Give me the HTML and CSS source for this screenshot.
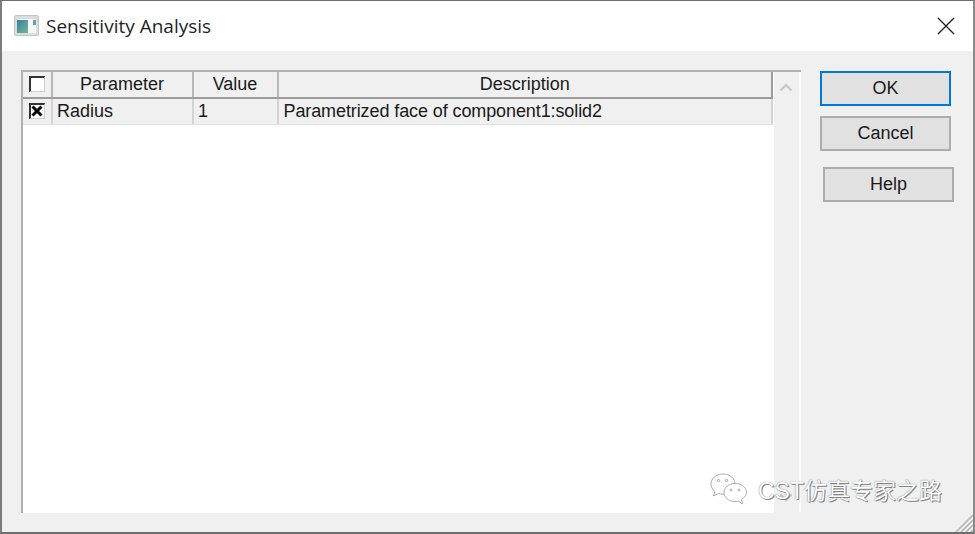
FILE: index.html
```html
<!DOCTYPE html>
<html lang="en">
<head>
<meta charset="utf-8">
<title>Sensitivity Analysis</title>
<link rel="stylesheet" href="styles.css">
</head>
<body>
<div class="window">
  <header class="titlebar">
    <svg class="app-icon" width="25" height="21" viewBox="0 0 25 21">
      <defs><linearGradient id="g" x1="0" y1="0" x2="1" y2="1"><stop offset="0" stop-color="#3f7fa6"/><stop offset="1" stop-color="#6fb88e"/></linearGradient></defs>
      <rect x="0.5" y="0.5" width="24" height="20" rx="1.5" fill="#d9dde0" stroke="#c0c4c7"/>
      <rect x="3" y="4" width="19" height="14" fill="#f4f6f7"/>
      <rect x="3" y="5" width="11" height="13" fill="url(#g)"/>
      <rect x="19" y="5" width="3" height="5" fill="#6fa3a0"/>
    </svg>
    <span class="title">Sensitivity Analysis</span>
    <svg class="close" width="18" height="18" viewBox="0 0 18 18"><path d="M1 1L17 17M17 1L1 17" stroke="#222" stroke-width="1.4" fill="none"/></svg>
  </header>
  <main class="content">
    <section class="listbox">
      <div class="table">
        <div class="row head">
          <div class="cell c0"><span class="check"></span></div>
          <div class="cell c1 center">Parameter</div>
          <div class="cell c2 center">Value</div>
          <div class="cell c3 center">Description</div>
        </div>
        <div class="row data">
          <div class="cell c0"><span class="check small"><svg width="12" height="12" viewBox="0 0 12 12"><path d="M1.500 1.500L10.500 10.500M10.500 1.500L1.500 10.500" stroke="#000" stroke-width="3" fill="none"/></svg></span></div>
          <div class="cell c1">Radius</div>
          <div class="cell c2">1</div>
          <div class="cell c3 desc">Parametrized face of component1:solid2</div>
        </div>
      </div>
      <div class="scrollbar">
        <svg width="14" height="9" viewBox="0 0 14 9"><path d="M1.5 7.5L7 2L12.5 7.5" stroke="#c8c8c8" stroke-width="2.4" fill="none"/></svg>
        <svg width="14" height="9" viewBox="0 0 14 9"><path d="M1.5 1.5L7 7L12.5 1.5" stroke="#c4c4c4" stroke-width="2.4" fill="none"/></svg>
      </div>
    </section>
    <aside class="buttons">
      <button class="btn primary">OK</button>
      <button class="btn">Cancel</button>
      <button class="btn help">Help</button>
    </aside>
  </main>
  <div class="watermark">
    <svg width="40" height="34" viewBox="0 0 40 34" fill="#fff" stroke="#999" stroke-width="0.8">
      <path d="M14 2C7 2 2 6.500 2 12C2 15 3.500 17.500 6 19.500L4.500 24L9.500 21.500C11 22 12.500 22.200 14 22.200C21 22.200 26 17.500 26 12C26 6.500 21 2 14 2Z"/>
      <path d="M26 11.500C19.500 11.500 15 15.500 15 20.500C15 25.500 19.500 29.500 26 29.500C27.200 29.500 28.400 29.300 29.500 29L33.500 32L32.500 27.500C35.500 25.500 37.500 23.200 37.500 20.500C37.500 15.500 32.500 11.500 26 11.500Z"/>
      <circle cx="9.500" cy="8.500" r="1.200"/><circle cx="17.500" cy="8.500" r="1.200"/>
      <circle cx="22" cy="18" r="1"/><circle cx="30" cy="18" r="1"/>
    </svg>
    <span class="wm-text">CST仿真专家之路</span>
  </div>
  <svg class="grip" width="20" height="20" viewBox="0 0 20 20"><path d="M20 3L3 20M20 8L8 20M20 13L13 20M20 18L18 20" stroke="#b4b4b4" stroke-width="1.600" fill="none"/></svg>
</div>
</body>
</html>
```
FILE: styles.css
```css
* { box-sizing: border-box; }
html, body { margin: 0; padding: 0; }
body { width: 975px; height: 534px; overflow: hidden; background: #f0f0f0; font-family: "Liberation Sans", Arial, sans-serif; font-size: 18px; color: #1a1a1a; }
.window { position: relative; width: 975px; height: 534px; display: flex; flex-direction: column; border-top: 1px solid #6e6e6e; border-left: 2px solid #7c7c7c; border-right: 2px solid #8a8a8a; border-bottom: 2px solid #6e6e6e; background: #f0f0f0; }
.titlebar { flex: 0 0 50px; display: flex; align-items: center; background: #fff; padding: 0 18px 0 12px; }
.app-icon { margin: 0 7px 2px 0; flex: none; }
.title { font-family: "Open Sans", sans-serif; font-size: 19px; color: #1f1f1f; flex: 1; }
.close { flex: none; }
.content { flex: 1; display: flex; align-items: flex-start; padding: 19px 0 0 19px; }
.listbox { width: 780px; height: 443px; flex: none; display: flex; background: #fff; border-top: 2px solid #b0b0b0; border-left: 2px solid #b0b0b0; }
.table { width: 750px; flex: none; }
.row { display: flex; }
.head { height: 27px; background: #f0f0f0; border-bottom: 2px solid #9c9c9c; }
.data { height: 26px; background: #f0f0f0; border-bottom: 1px solid #e2e2e2; }
.cell { display: flex; align-items: center; padding-left: 4.500px; border-right: 2px solid #d4d4d4; height: 100%; white-space: nowrap; }
.head .cell { border-right-color: #b8b8b8; padding-bottom: 1px; }
.head .c3 { border-right-color: #9c9c9c; }
.center { justify-content: center; padding-left: 0; }
.c0 { width: 29.500px; justify-content: center; padding-left: 0; }
.c1 { width: 141px; }
.c2 { width: 85px; }
.c3 { width: 494.500px; }
.desc { letter-spacing: -0.100px; padding-left: 5px; }
.check { display: block; width: 16px; height: 16px; border-top: 2px solid #333; border-left: 2px solid #333; border-right: 1px solid #d0d0d0; border-bottom: 1px solid #d0d0d0; background: #fff; }
.check.small { width: 16px; height: 16px; margin-bottom: 2px; display: flex; align-items: center; justify-content: center; }
.scrollbar { flex: 1; background: #f0f0f0; border-left: 1px solid #fff; border-right: 2px solid #f8f8f8; display: flex; flex-direction: column; align-items: center; justify-content: space-between; padding: 11px 2px 11px 0; }
.buttons { display: flex; flex: none; flex-direction: column; align-items: flex-start; margin-left: 19px; }
.btn { width: 131px; height: 35px; background: #e1e1e1; border: 2px solid #adadad; font: 18px "Liberation Sans", Arial, sans-serif; color: #1a1a1a; padding: 0; }
.btn.primary { border-color: #0078d7; margin-top: 1px; margin-bottom: 10px; }
.btn.help { margin-top: 16px; margin-left: 3px; }
.watermark { position: absolute; left: 707px; top: 471px; display: flex; align-items: center; gap: 9px; }
.wm-text { font-family: "Liberation Sans", "Noto Sans CJK SC", sans-serif; font-size: 23px; color: #fff; text-shadow: 0 0 1px #555, 1px 1px 0 #888; }
.grip { position: absolute; right: 0; bottom: 0; }
```
